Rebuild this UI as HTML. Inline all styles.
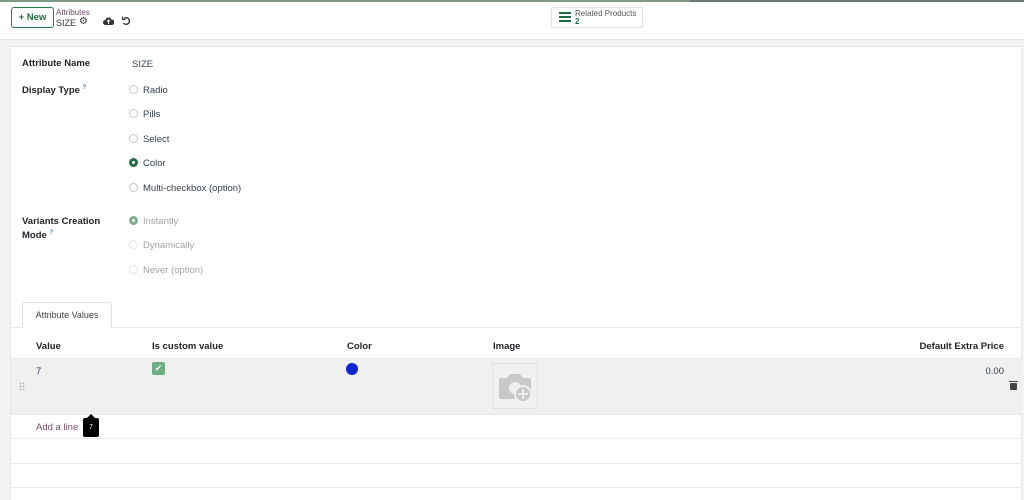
<!DOCTYPE html>
<html><head><meta charset="utf-8"><style>
*{margin:0;padding:0;box-sizing:border-box}
body{width:1024px;height:500px;overflow:hidden;background:#fff;font-family:"Liberation Sans","DejaVu Sans",sans-serif;font-size:9.5px;color:#374151;position:relative}
.a{position:absolute;white-space:nowrap}
.b{font-weight:bold;color:#212529}
.r{position:absolute;width:9px;height:9px;border:1px solid #c4c8cc;border-radius:50%;background:#fff}
.hl{position:absolute;left:11px;width:1011px;height:1px;background:#e7e9ed}
.q{color:#3b82c4;font-size:6px;position:relative;top:-4px;line-height:0}
</style></head><body>
<div class="a" style="left:0;top:0;width:690px;height:2px;background:#7c9c86"></div>
<div class="a" style="left:690px;top:0;width:334px;height:2px;background:#6c7a72"></div>
<div class="a" style="left:0;top:39px;width:1024px;height:461px;background:#f3f4f6;border-top:1px solid #e5e7eb"></div>
<div class="a" style="left:10px;top:46px;width:1012px;height:454px;background:#fff;border-left:1px solid #e2e5e9;border-top:1px solid #e2e5e9;border-right:1px solid #e2e5e9"></div>

<div class="a" style="left:11px;top:7px;width:43px;height:21px;border:1px solid #2a7d4f;border-radius:3px;color:#1f6b40;font-weight:bold;font-size:9.5px;line-height:19px;text-align:center">+ New</div>
<div class="a" style="left:56px;top:8px;font-size:8px;color:#714b67">Attributes</div>
<div class="a" style="left:56px;top:18px;font-size:9px;color:#333">SIZE</div>
<div class="a" style="left:79px;top:16px;font-size:10px;color:#333">⚙</div>
<svg class="a" style="left:103px;top:17px" width="11" height="8" viewBox="0 0 11 8"><path d="M2.5 8a2.5 2.5 0 0 1 0-5 3 3 0 0 1 5.8-.5A2.5 2.5 0 0 1 9 8z" fill="#333"/><path d="M5.5 3v4M4 4.5l1.5-1.5 1.5 1.5" stroke="#fff" stroke-width="1" fill="none"/></svg>
<svg class="a" style="left:122px;top:16px" width="9" height="10" viewBox="0 0 9 10"><path d="M2 2.5A3.3 3.3 0 1 1 1.5 7" stroke="#333" stroke-width="1.4" fill="none"/><path d="M0.5 0.5v3h3" stroke="#333" stroke-width="1.2" fill="none"/></svg>

<div class="a" style="left:551px;top:7px;width:92px;height:21px;border:1px solid #dee2e6;border-radius:2px"></div>
<div class="a" style="left:559px;top:12px;width:12px;height:2px;background:#1f6b40;box-shadow:0 4px 0 #1f6b40,0 8px 0 #1f6b40"></div>
<div class="a" style="left:575px;top:9px;font-size:8px;color:#555">Related Products</div>
<div class="a" style="left:575px;top:17px;font-size:8px;color:#1f6b40;font-weight:bold">2</div>

<div class="a b" style="left:22px;top:58px">Attribute Name</div>
<div class="a" style="left:132px;top:59px">SIZE</div>
<div class="a b" style="left:22px;top:85px">Display Type <span class="q">?</span></div>
<div class="r" style="left:129px;top:85px"></div><div class="a" style="left:143px;top:85px">Radio</div>
<div class="r" style="left:129px;top:109px"></div><div class="a" style="left:143px;top:109px">Pills</div>
<div class="r" style="left:129px;top:134px"></div><div class="a" style="left:143px;top:134px">Select</div>
<div class="r" style="left:129px;top:158px;border:3px solid #1f6b40"></div><div class="a" style="left:143px;top:158px">Color</div>
<div class="r" style="left:129px;top:183px"></div><div class="a" style="left:143px;top:183px">Multi-checkbox (option)</div>

<div class="a b" style="left:22px;top:215px;line-height:14px">Variants Creation<br>Mode <span class="q">?</span></div>
<div class="r" style="left:129px;top:216px;border:3px solid #7fae8c"></div><div class="a" style="left:143px;top:216px;color:#a0a4a8">Instantly</div>
<div class="r" style="left:129px;top:240px;border-color:#e1e3e6"></div><div class="a" style="left:143px;top:240px;color:#a0a4a8">Dynamically</div>
<div class="r" style="left:129px;top:265px;border-color:#e1e3e6"></div><div class="a" style="left:143px;top:265px;color:#a0a4a8">Never (option)</div>

<div class="hl" style="top:327px"></div>
<div class="a" style="left:22px;top:302px;width:90px;height:26px;border:1px solid #dee2e6;border-bottom:none;background:#fff;border-radius:3px 3px 0 0;text-align:center;line-height:24px;font-size:9px;color:#444">Attribute Values</div>

<div class="a b" style="left:36px;top:341px">Value</div>
<div class="a b" style="left:152px;top:341px">Is custom value</div>
<div class="a b" style="left:347px;top:341px">Color</div>
<div class="a b" style="left:493px;top:341px">Image</div>
<div class="a b" style="right:20px;top:341px">Default Extra Price</div>
<div class="hl" style="top:358px"></div>
<div class="a" style="left:11px;top:359px;width:1011px;height:55px;background:#f0f0f0"></div>
<div class="a" style="left:36px;top:366px">7</div>
<div class="a" style="left:152px;top:362px;width:13px;height:13px;background:#6fae82;border-radius:2px;color:#fff;font-size:9px;line-height:13px;text-align:center">✔</div>
<div class="a" style="left:346px;top:363px;width:12px;height:12px;border-radius:50%;background:#0a26d0"></div>
<div class="a" style="left:492px;top:363px;width:46px;height:46px;border:1px solid #e2e2e2"></div>
<svg class="a" style="left:498px;top:372px" width="36" height="32" viewBox="0 0 36 32"><path d="M3 6h6l3-4h10l3 4h6a2 2 0 0 1 2 2v17a2 2 0 0 1-2 2H3a2 2 0 0 1-2-2V8a2 2 0 0 1 2-2z" fill="#c8c8c8"/><circle cx="17" cy="16" r="6" fill="#eee"/><circle cx="25" cy="22" r="8" fill="#c8c8c8" stroke="#f0f0f0" stroke-width="2"/><path d="M25 17v10M20 22h10" stroke="#f0f0f0" stroke-width="1.8"/></svg>
<div class="a" style="right:20px;top:366px">0.00</div>
<div class="a" style="left:1010px;top:383px;width:7px;height:7px;background:#444;border-radius:1px"></div>
<div class="a" style="left:1009px;top:381px;width:9px;height:1px;background:#444"></div>
<div class="a" style="left:19px;top:382px;width:6px;height:8px;background-image:radial-gradient(#bbb 45%,transparent 50%);background-size:3px 3px"></div>

<div class="hl" style="top:414px"></div>
<div class="a" style="left:36px;top:422px;color:#714b67">Add a line</div>
<div class="a" style="left:83px;top:418px;width:16px;height:19px;background:#000;border-radius:2px;color:#fff;font-size:7px;text-align:center;line-height:19px">7</div>
<div class="a" style="left:86px;top:414px;width:0;height:0;border-left:5px solid transparent;border-right:5px solid transparent;border-bottom:5px solid #000"></div>
<div class="hl" style="top:438px"></div>
<div class="hl" style="top:463px"></div>
<div class="hl" style="top:487px"></div>
</body></html>
